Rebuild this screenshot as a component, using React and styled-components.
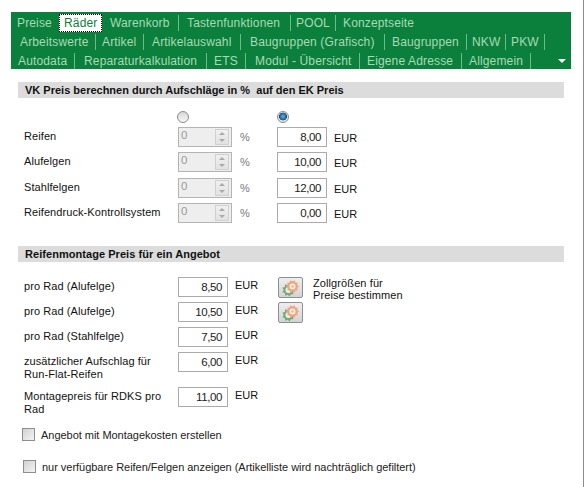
import React from 'react';
import styled, { createGlobalStyle } from 'styled-components';

const Global = createGlobalStyle`
  html, body { margin: 0; padding: 0; background: #fff; }
  body { font-family: "Liberation Sans", Arial, sans-serif; }
`;

const Page = styled.div`
  width: 584px; height: 487px; box-sizing: border-box; overflow: hidden;
  padding: 12px 0 0 11px; border-right: 1px solid #8c8c8c; color: #111;
`;
const Nav = styled.nav`
  position: relative; width: 560px; height: 57px; background: #0b803c; box-sizing: border-box;
  padding-top: 1px;
`;
const NavRow = styled.div`
  display: flex; align-items: center; height: 19px; padding-left: ${p => p.$left}px;
`;
const Tab = styled.span`
  font-size: 12px; letter-spacing: 0.15px; color: #a9d9b6; white-space: nowrap; line-height: 16px;
  box-sizing: border-box; flex: none; width: ${p => p.$w ? `${p.$w}px` : 'auto'};
  padding-left: ${p => p.$pl ?? 0}px;
  border-right: 1px solid ${p => p.$sep ? '#6fb98a' : 'transparent'};
`;
const ActiveTab = styled.span`
  font-size: 12px; letter-spacing: 0.15px; color: #0b803c; background: #fff; white-space: nowrap;
  outline: 1px dotted #000; outline-offset: -1px; height: 18px; line-height: 18px; width: 43px; box-sizing: border-box; padding-left: 5px;
`;
const MenuArrow = styled.span`
  position: absolute; right: 5px; bottom: 6px; width: 0; height: 0;
  border-left: 4px solid transparent; border-right: 4px solid transparent; border-top: 4px solid #fff;
`;
const SectionHead = styled.h2`
  margin: ${p => p.$top}px 0 0 7px; width: 546px; height: 16px; box-sizing: border-box; padding-left: 7px;
  background: #dcdcdc; font-size: 11px; line-height: 16px; font-weight: bold; color: #111; white-space: pre;
  letter-spacing: ${p => p.$spacing ?? 0}px;
`;
const RadioRow = styled.div`
  display: flex; height: 16px; margin: 13px 0 0 166px; gap: 88px; align-items: flex-start;
`;
const Radio = styled.span`
  width: 12px; height: 12px; border-radius: 50%; box-sizing: border-box; border: 1px solid #8b8b8b;
  background: ${p => p.$on ? 'radial-gradient(circle at 50% 45%, #5fb4e4 0, #1c6a9e 42%, #123f60 50%, #e6e6e6 56%)' : 'linear-gradient(#d8d8d8,#f6f6f6)'};
`;
const VkGrid = styled.div`
  display: grid; grid-template-columns: 154px 62px 37px 57px auto; grid-auto-rows: 25.33px;
  margin: 0 0 0 13px; align-items: start;
`;
const Label = styled.div`
  box-sizing: border-box; font-size: 11px; line-height: 12.5px; padding-top: ${p => p.$pt ?? 2}px; letter-spacing: 0.08px;
  white-space: ${p => p.$wrap ? 'normal' : 'nowrap'}; height: ${p => p.$h ? `${p.$h}px` : 'auto'};
  padding-right: ${p => p.$wrap ? 12 : 0}px;
`;
const Unit = styled.div`
  font-size: 11px; line-height: 13px; padding-top: ${p => p.$pt ?? 4}px; color: ${p => p.$muted ? '#777' : '#111'};
`;
const Spinner = styled.div`
  width: 54px; height: 20px; box-sizing: border-box; border: 1px solid #b4b4b4; background: #eee; display: flex;
  justify-content: space-between; font-size: 11.5px; line-height: 15px; color: #9a9a9a; padding-left: 2px;
`;
const SpinBtns = styled.div`
  width: 14px; margin-right: 2px; margin-top: 1px; height: 16px; border: 1px solid #d0d0d0; background: linear-gradient(#f0f0f0,#e2e2e2);
  display: flex; flex-direction: column; align-items: center; justify-content: space-around; box-sizing: border-box;
`;
const Up = styled.i`
  width: 0; height: 0; border-left: 3px solid transparent; border-right: 3px solid transparent; border-bottom: 3px solid #a9a9a9;
`;
const Down = styled.i`
  width: 0; height: 0; border-left: 3px solid transparent; border-right: 3px solid transparent; border-top: 3px solid #a9a9a9;
`;
const Value = styled.div`
  width: 50px; height: 20px; box-sizing: border-box; border: 1px solid #ababab; background: #fff; text-align: right;
  font-size: 11.5px; letter-spacing: -0.4px; line-height: 18px; padding-right: 5px; color: #222;
`;
const MountArea = styled.div`
  display: flex; margin: 15px 0 0 13px;
`;
const MountGrid = styled.div`
  display: grid; grid-template-columns: 154px 57px auto; width: 254px; align-items: start; align-content: start;
`;
const ToolCol = styled.div`
  display: grid; grid-template-columns: 25px auto; column-gap: 10px; grid-auto-rows: 25px; align-content: start;
`;
const ToolBtn = styled.button`
  width: 25px; height: 21px; padding: 0; border: 1px solid #8f8f8f; border-radius: 2px;
  background: linear-gradient(#eee,#d4d4d4); display: flex; align-items: center; justify-content: center;
`;
const ToolText = styled.div`
  font-size: 11px; line-height: 12px; letter-spacing: 0.1px; grid-row: span 2;
`;
const Check = styled.div`
  display: flex; align-items: center; gap: 6px; font-size: 11px; letter-spacing: -0.03px; color: #222;
  margin: ${p => p.$top}px 0 0 ${p => p.$left}px; height: 13px; white-space: nowrap;
`;
const Box = styled.span`
  flex: none; width: 13px; height: 13px; box-sizing: border-box; border: 1px solid #8e8e8e; background: linear-gradient(135deg,#d2d2d2,#f4f4f4);
`;

const gearPath = (cx, cy, r1, r2, n) => {
  let d = '';
  for (let i = 0; i < n * 2; i++) {
    const a = (Math.PI * i) / n;
    const r = i % 2 ? r2 : r1;
    d += `${i ? 'L' : 'M'}${(cx + r * Math.cos(a)).toFixed(2)} ${(cy + r * Math.sin(a)).toFixed(2)}`;
  }
  return d + 'Z';
};

const Gear = () => (
  <svg width="20" height="18" viewBox="0 0 20 18">
    <path d={gearPath(7.5, 11, 6.5, 4.8, 9)} fill="#74aa7c" />
    <circle cx="7.5" cy="11" r="3" fill="#eef2e6" />
    <path d={gearPath(11.5, 7.5, 6.5, 5, 10)} fill="#eea585" />
    <circle cx="11.5" cy="7.5" r="3" fill="#f8efdc" />
    <circle cx="11.5" cy="7.5" r="1.3" fill="#e8b98a" />
  </svg>
);

const Spin = () => (
  <Spinner>0<SpinBtns><Up /><Down /></SpinBtns></Spinner>
);

const vk = [['Reifen', '8,00'], ['Alufelgen', '10,00'], ['Stahlfelgen', '12,00'], ['Reifendruck-Kontrollsystem', '0,00']];
const mount = [
  ['pro Rad (Alufelge)', '8,50', 25],
  ['pro Rad (Alufelge)', '10,50', 25],
  ['pro Rad (Stahlfelge)', '7,50', 25],
  ['zusätzlicher Aufschlag für Run-Flat-Reifen', '6,00', 35],
  ['Montagepreis für RDKS pro Rad', '11,00', 25],
];

export default function App() {
  return (
    <Page>
      <Global />
      <Nav>
        <NavRow $left={6}>
          <Tab $w={42}>Preise</Tab><ActiveTab>Räder</ActiveTab>
          <Tab $w={77} $pl={8} $sep>Warenkorb</Tab>
          <Tab $w={112} $pl={8} $sep>Tastenfunktionen</Tab>
          <Tab $w={45} $pl={5} $sep>POOL</Tab>
          <Tab $pl={7}>Konzeptseite</Tab>
        </NavRow>
        <NavRow $left={9}>
          <Tab $w={76} $sep>Arbeitswerte</Tab>
          <Tab $w={48} $pl={6} $sep>Artikel</Tab>
          <Tab $w={97} $pl={8} $sep>Artikelauswahl</Tab>
          <Tab $w={144} $pl={9} $sep>Baugruppen (Grafisch)</Tab>
          <Tab $w={82} $pl={7} $sep>Baugruppen</Tab>
          <Tab $w={39} $pl={5} $sep>NKW</Tab>
          <Tab $w={39} $pl={5} $sep>PKW</Tab>
        </NavRow>
        <NavRow $left={7}>
          <Tab $w={57} $sep>Autodata</Tab>
          <Tab $w={132} $pl={9} $sep>Reparaturkalkulation</Tab>
          <Tab $w={39} $pl={7} $sep>ETS</Tab>
          <Tab $w={114} $pl={9} $sep>Modul - Übersicht</Tab>
          <Tab $w={102} $pl={7} $sep>Eigene Adresse</Tab>
          <Tab $w={69} $pl={7} $sep>Allgemein</Tab>
        </NavRow>
        <MenuArrow />
      </Nav>

      <SectionHead $top={13}>{'VK Preis berechnen durch Aufschläge in %  auf den EK Preis'}</SectionHead>
      <RadioRow><Radio /><Radio $on /></RadioRow>
      <VkGrid>
        {vk.map(([l, v]) => (
          <React.Fragment key={l}>
            <Label $pt={3}>{l}</Label><Spin /><Unit $muted>%</Unit><Value>{v}</Value><Unit $pt={5}>EUR</Unit>
          </React.Fragment>
        ))}
      </VkGrid>

      <SectionHead $top={18} $spacing={0.05}>Reifenmontage Preis für ein Angebot</SectionHead>
      <MountArea>
        <MountGrid>
          {mount.map(([l, v, h]) => (
            <React.Fragment key={l + v}>
              <Label $wrap $pt={3} $h={h}>{l}</Label><Value>{v}</Value><Unit $pt={2}>EUR</Unit>
            </React.Fragment>
          ))}
        </MountGrid>
        <ToolCol>
          <ToolBtn><Gear /></ToolBtn>
          <ToolText>Zollgrößen für<br />Preise bestimmen</ToolText>
          <ToolBtn><Gear /></ToolBtn>
        </ToolCol>
      </MountArea>
      <Check $top={16} $left={11}><Box />Angebot mit Montagekosten erstellen</Check>
      <Check $top={19} $left={12}><Box />nur verfügbare Reifen/Felgen anzeigen (Artikelliste wird nachträglich gefiltert)</Check>
    </Page>
  );
}
